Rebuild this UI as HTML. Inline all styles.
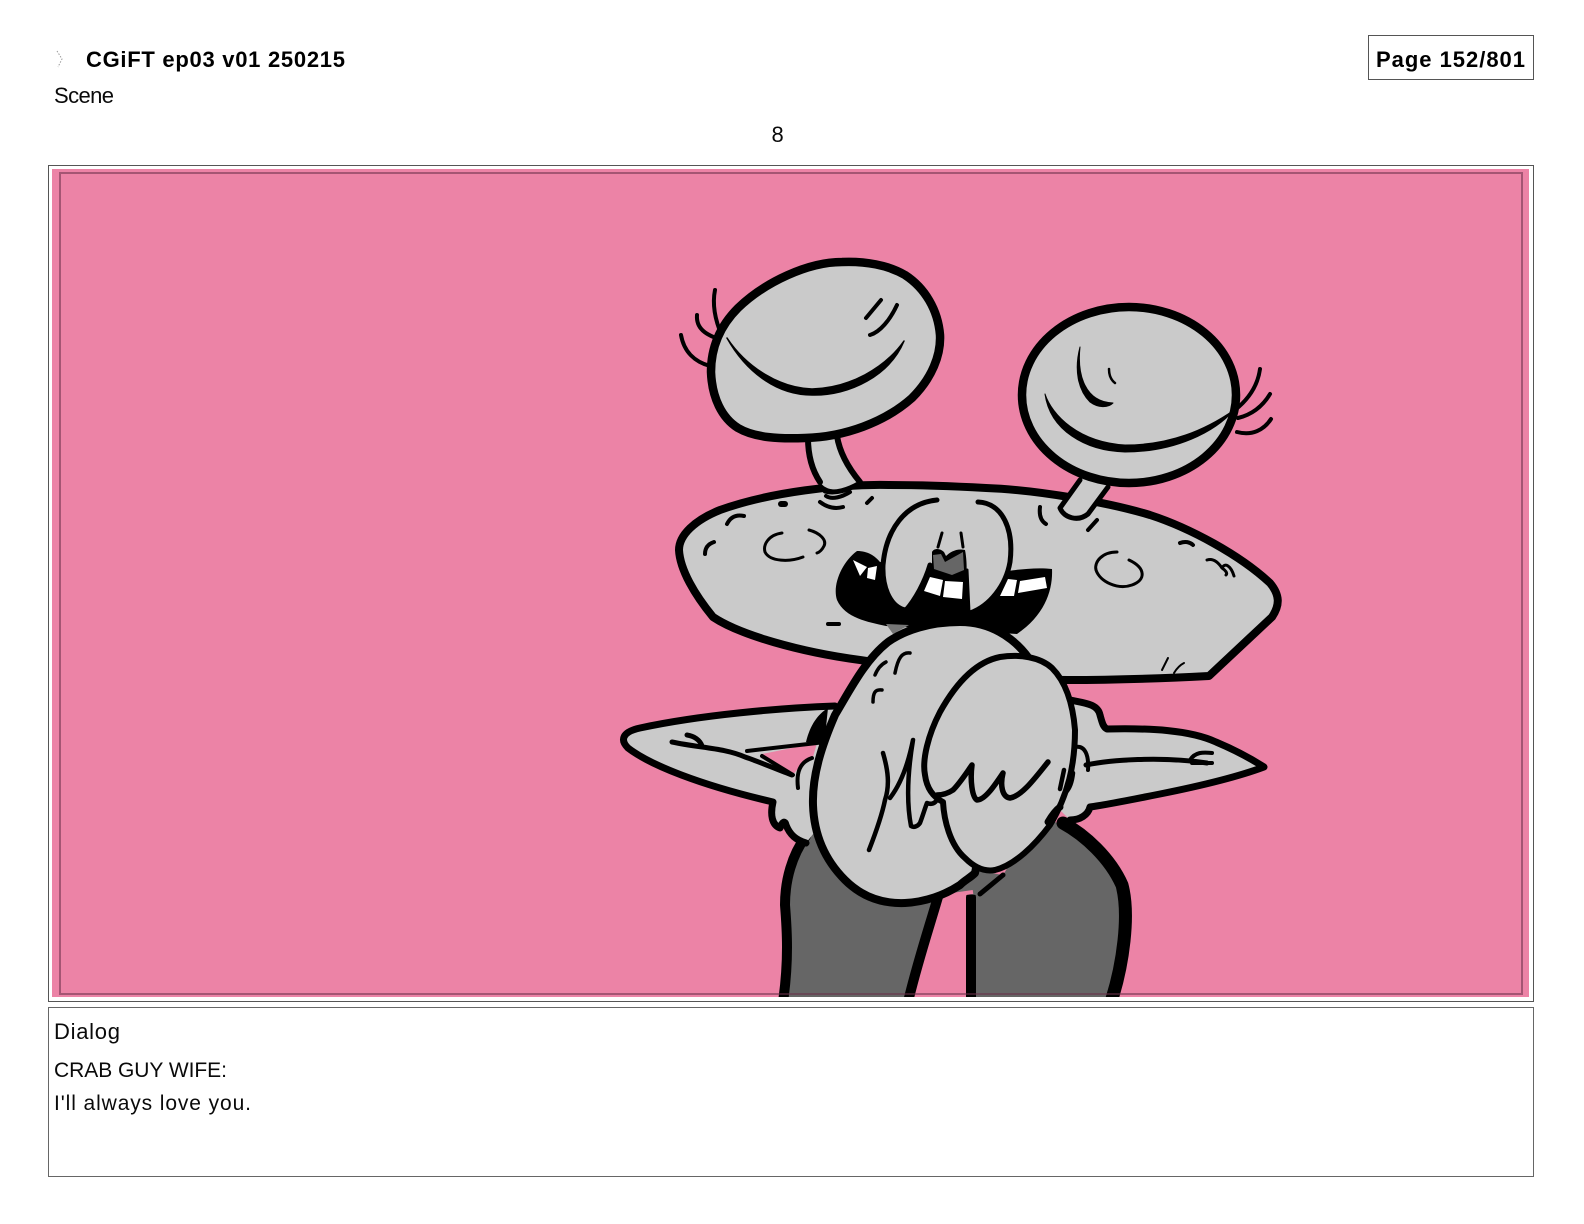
<!DOCTYPE html>
<html lang="en">
<head>
<meta charset="utf-8">
<title>CGiFT ep03 v01 250215</title>
<style>
html,body{margin:0;padding:0;background:#fff;width:1584px;height:1224px;overflow:hidden}
svg{display:block}
text{font-family:"Liberation Sans",sans-serif;fill:#0a0a0a}
.b{font-weight:700;font-size:22px;fill:#000}
.r{font-size:22px}
.k{fill:none;stroke:#000;stroke-linecap:round;stroke-linejoin:round}
.g{fill:#cacaca;stroke:#000;stroke-linejoin:round}
</style>
</head>
<body>
<svg width="1584" height="1224" viewBox="0 0 1584 1224" xmlns="http://www.w3.org/2000/svg">
<defs><clipPath id="c"><rect x="52" y="169" width="1477" height="828"/></clipPath></defs>
<rect width="1584" height="1224" fill="#fff"/>

<!-- header -->
<path d="M57 51l5 8-4 8" fill="none" stroke="#999" stroke-width="1" stroke-dasharray="1.5 1.5"/>
<text class="b" x="86" y="67" textLength="259" lengthAdjust="spacing">CGiFT ep03 v01 250215</text>
<text class="r" x="54" y="103" textLength="60" lengthAdjust="spacing">Scene</text>
<rect x="1368.5" y="35.5" width="165" height="44" fill="#fff" stroke="#555" stroke-width="1"/>
<text class="b" x="1376" y="67" textLength="149" lengthAdjust="spacing">Page 152/801</text>
<text class="r" x="771.5" y="142">8</text>

<!-- panel -->
<rect x="48.5" y="165.5" width="1485" height="836" fill="#fff" stroke="#555" stroke-width="1"/>
<rect x="52" y="169" width="1477" height="828" fill="#ec83a6"/>

<g clip-path="url(#c)">
<!-- legs -->
<path d="M810 830C792 850 785 880 785 905C787 930 789 960 783 1002L908 1002C918 960 930 925 940 890L900 860Z" fill="#666"/>
<path class="k" stroke-width="10" d="M806 836C792 855 785 880 785 905C787 930 789 960 783 1002M908 1002C918 960 930 925 940 890"/>
<path d="M1040 815C1075 830 1105 850 1120 885C1130 915 1122 965 1111 1002L971 1002L971 897L1003 875Z" fill="#666"/>
<path class="k" stroke-width="13" d="M1063 823C1085 835 1110 858 1122 885C1130 915 1123 965 1111 1002"/>
<path class="k" stroke-width="10" d="M971 1002L971 897"/>
<path d="M950 892L976 895L1002 875L968 868Z" fill="#666" stroke="none"/>
<path d="M945 896L973 892" stroke="#ec83a6" stroke-width="4" fill="none"/>
<path class="k" stroke-width="5" d="M980 894L1003 875"/>

<!-- arms -->
<path d="M835 706C780 708 700 715 640 728C622 732 620 740 628 748C650 765 700 785 773 802C770 815 772 825 780 828C782 822 785 820 786 825C790 835 796 840 806 843L840 800Z" fill="#cacaca"/>
<path class="k" stroke-width="7" d="M835 706C780 708 700 715 640 728C622 732 620 740 628 748C650 765 700 785 773 802C770 815 772 825 780 828C782 822 785 820 786 825C790 835 796 840 806 843"/>
<path d="M762 754L817 743L813 757C805 760 798 768 793 775Z" fill="#ec83a6"/>
<path class="k" stroke-width="4" d="M747 751L817 743M762 756L793 775"/>
<path class="k" stroke-width="5" d="M672 742C700 748 725 748 745 757C760 762 778 770 792 775"/>
<path class="k" stroke-width="5" d="M687 735C694 736 700 740 702 746"/>
<path d="M806 742C810 725 818 714 828 708L824 746Z" fill="#000"/>
<path class="k" stroke-width="4" d="M812 758C800 762 796 772 798 788"/>

<path d="M1070 700C1085 703 1098 704 1100 715C1102 722 1103 727 1107 729C1150 728 1190 730 1216 742C1235 750 1250 758 1264 767C1240 776 1200 786 1160 794C1130 800 1105 805 1090 807C1088 815 1080 820 1070 820L1050 800Z" fill="#cacaca"/>
<path class="k" stroke-width="7" d="M1070 700C1085 703 1098 704 1100 715C1102 722 1103 727 1107 729C1150 728 1190 730 1216 742C1235 750 1250 758 1264 767C1240 776 1200 786 1160 794C1130 800 1105 805 1090 807C1088 815 1080 820 1070 820"/>
<path class="k" stroke-width="5" d="M1086 765C1110 760 1160 756 1207 763"/>
<path class="k" stroke-width="4" d="M1190 760C1195 752 1203 752 1212 753M1192 763L1212 763"/>
<path class="k" stroke-width="4" d="M1075 747C1085 745 1089 755 1088 770"/>

<!-- crab body -->
<path class="g" stroke-width="8" d="M889 485C840 484 770 492 720 510C695 520 679 535 679 550C680 570 695 595 713 617C740 635 800 652 860 660C900 666 1000 680 1068 680C1120 680 1170 678 1209 676L1272 617C1280 605 1280 595 1270 583C1240 555 1190 528 1150 515C1110 503 1040 490 986 488C950 486 920 485 889 485Z"/>

<!-- body details -->
<g class="k" stroke-width="3">
<path d="M782 533C768 535 763 545 765 552C770 562 790 562 803 557"/>
<path d="M809 530C820 533 827 540 824 546C822 550 820 552 817 553"/>
<path d="M1117 552C1102 552 1094 562 1096 570C1100 582 1118 590 1132 585C1146 580 1146 568 1129 560"/>
<path stroke-width="4" d="M744 516C735 514 730 518 727 524"/>
<path stroke-width="4" d="M714 542C708 544 705 548 705 554"/>
<path stroke-width="6" d="M781 504L785 504"/>
<path stroke-width="4" d="M826 496C832 500 842 497 850 492"/>
<path stroke-width="4" d="M820 502C828 508 836 509 843 507"/>
<path stroke-width="4" d="M872 498L867 503"/>
<path stroke-width="4" d="M1040 507C1039 515 1041 521 1046 524"/>
<path stroke-width="4" d="M1097 520L1088 530"/>
<path stroke-width="4" d="M1180 543C1185 541 1190 542 1193 545"/>
<path d="M1207 560C1213 558 1218 562 1222 568C1225 562 1231 566 1234 576M1222 568C1225 570 1228 573 1226 575"/>
<path stroke-width="4" d="M828 624L839 624"/>
<path stroke-width="2" d="M1162 670L1168 658M1174 673C1177 668 1180 665 1184 663"/>
</g>

<!-- mouth -->
<path d="M857 551C868 551 875 556 880 562L1000 572C1015 570 1035 567 1052 569C1053 590 1045 615 1017 634L886 626C868 622 845 618 837 600C832 585 842 562 857 551Z" fill="#000"/>
<path d="M853 560L867 567L860 576Z" fill="#fff"/>
<path d="M868 568L877 566L875 580L867 578Z" fill="#fff"/>
<path d="M930 577L943 580L940 596L924 591Z" fill="#fff"/>
<path d="M945 581L963 582L962 599L943 597Z" fill="#fff"/>
<path d="M1008 579L1017 580L1014 596L1000 596Z" fill="#fff"/>
<path d="M1020 581L1045 577L1047 588L1018 593Z" fill="#fff"/>
<path d="M886 624L909 625L893 634Z" fill="#777"/>

<!-- snout -->
<path d="M938 499C905 500 884 530 883 565C882 590 892 610 908 609C917 595 924 580 928 570L932 552L966 552L968 590L969 613C990 606 1003 590 1010 562C1014 530 1003 502 977 502Z" fill="#cacaca"/>
<path class="k" stroke-width="5" d="M937 500C905 503 886 530 883 565C882 590 892 608 906 610C915 600 925 582 930 565"/>
<path class="k" stroke-width="5" d="M978 502C1003 503 1014 530 1010 562C1006 585 990 606 970 613"/>
<path d="M932 552C934 548 940 548 944 552L946 556C950 552 957 548 965 550C968 565 966 580 966 585L960 574L950 575L932 570Z" fill="#000"/>
<path d="M933 555L941 554L945 562L963 552L964 570L952 575L934 569Z" fill="#666"/>
<path class="k" stroke-width="3" d="M942 533L938 547M961 533L963 547"/>
<path class="k" stroke-width="3" d="M967 570L969 612"/>

<!-- large front oval -->
<path class="g" stroke-width="8" d="M960 622C930 622 905 630 888 642C865 660 850 690 835 715C822 745 812 775 813 805C814 835 825 860 845 880C860 895 880 904 905 903C925 902 945 895 960 885C965 880 970 878 975 873L1010 700L1040 680C1030 650 1000 622 960 622Z"/>
<path class="g" stroke-width="6" d="M1000 657C975 662 955 685 940 712C928 735 922 760 925 775C927 790 935 798 943 802C944 820 950 845 965 858C975 868 985 872 995 870C1015 865 1035 845 1050 825C1068 795 1075 765 1075 730C1073 705 1066 682 1052 668C1040 657 1020 654 1000 657Z"/>

<!-- hand/ hair strokes -->
<g class="k" stroke-width="4.5">
<path d="M869 850C876 832 882 815 885 800C890 785 888 770 883 753"/>
<path d="M890 798C900 785 908 765 913 740C908 770 906 800 911 826C914 828 918 826 920 823C923 815 925 808 927 803C932 805 935 803 937 800"/>
<path stroke-width="5.5" d="M937 795C945 795 950 792 953 790C960 783 967 772 972 765C970 780 972 797 977 800C985 800 995 785 1003 773C1000 785 1002 797 1010 798C1022 796 1035 778 1048 762"/>
<path d="M1064 770L1060 789M1073 773C1072 782 1070 788 1066 792"/>
<path stroke-width="7" d="M1048 822C1052 815 1056 810 1060 807"/>
<path stroke-width="3.5" d="M886 662C880 665 877 670 875 675M910 653C902 652 898 658 895 673M882 690C875 689 873 693 873 702"/>
</g>

<!-- stalks -->
<path d="M808 436C808 455 812 470 820 482C825 490 838 494 860 482C850 470 840 455 837 436Z" fill="#cacaca"/>
<path class="k" stroke-width="6" d="M808 438C808 455 812 470 820 482M837 436C840 455 850 470 860 482"/>
<path class="k" stroke-width="5" d="M825 491C835 494 848 490 860 483"/>
<path d="M1080 478L1060 508C1065 515 1078 520 1088 514L1110 484Z" fill="#cacaca"/>
<path class="k" stroke-width="5" d="M1080 480L1060 508C1064 518 1078 522 1088 514L1108 487"/>

<!-- left eye -->
<g class="k" stroke-width="4">
<path d="M715 290C712 305 715 320 722 336"/>
<path d="M697 315C696 328 705 335 722 340"/>
<path d="M681 335C684 352 695 362 710 366"/>
</g>
<path class="g" stroke-width="8.5" d="M842 262C808 262 765 282 738 308C720 326 711 348 711 372C712 398 722 418 738 428C755 438 780 439 805 438C845 437 885 422 912 398C932 378 941 355 940 335C938 310 925 288 905 275C888 265 865 261 842 262Z"/>
<path d="M727 338C747 368 780 388 812 389C850 388 885 368 904 341C890 375 850 396 812 395C775 395 745 370 727 338Z" fill="#000" stroke="#000" stroke-width="1.5" stroke-linejoin="round"/>
<path class="k" stroke-width="4" d="M881 300L866 318M897 305C890 320 880 332 870 335"/>

<!-- right eye -->
<g class="k" stroke-width="4">
<path d="M1235 410C1250 398 1258 384 1260 369"/>
<path d="M1238 418C1254 414 1264 404 1270 394"/>
<path d="M1237 432C1252 436 1264 430 1271 419"/>
</g>
<ellipse class="g" cx="1129" cy="395" rx="107" ry="88" stroke-width="8.5"/>
<path d="M1045 394C1052 415 1078 442 1125 445C1170 445 1205 430 1234 410C1215 432 1175 452 1125 452C1085 451 1050 430 1045 394Z" fill="#000" stroke="#000" stroke-width="1" stroke-linejoin="round"/>
<path d="M1080 347C1077 375 1085 402 1113 403C1108 408 1098 408 1090 402C1078 390 1074 370 1080 347Z" fill="#000" stroke="#000" stroke-width="1" stroke-linejoin="round"/>
<path class="k" stroke-width="2.5" d="M1109 369C1109 375 1111 380 1115 383"/>
</g>

<!-- inner panel line -->
<rect x="60" y="173" width="1462" height="821" fill="none" stroke="#6a3048" stroke-opacity=".55" stroke-width="2"/>

<!-- dialog -->
<rect x="48.5" y="1007.5" width="1485" height="169" fill="#fff" stroke="#666" stroke-width="1"/>
<text class="r" x="54" y="1039" textLength="66" lengthAdjust="spacing">Dialog</text>
<text class="r" x="54" y="1077" textLength="173" lengthAdjust="spacing" style="font-size:21px">CRAB GUY WIFE:</text>
<text class="r" x="54" y="1110" textLength="197" lengthAdjust="spacing" style="font-size:21px">I'll always love you.</text>
</svg>
</body>
</html>
